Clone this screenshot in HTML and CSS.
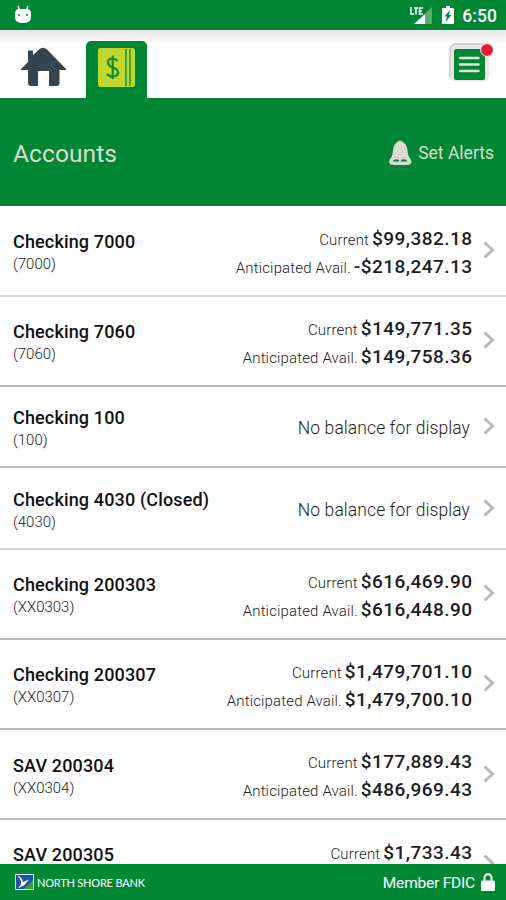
FILE: index.html
```html
<!DOCTYPE html>
<html lang="en">
<head>
<meta charset="utf-8">
<title>Accounts</title>
<link rel="stylesheet" href="styles.css">
</head>
<body>
<div class="app">
  <div class="status">
    <svg class="droid" width="18" height="20" viewBox="0 0 18 20"><path d="M4 1l2 5M14 1l-2 5" stroke="#fff" stroke-width="1.5"/><path d="M1 9q0-5 4-5h8q4 0 4 5v3q0 6-8 6t-8-6z" fill="#fff"/><circle cx="5" cy="10" r="1" fill="#008736"/><circle cx="13" cy="10" r="1" fill="#008736"/></svg>
    <div class="status-right">
      <svg width="23" height="20" viewBox="0 0 23 20"><path d="M15 7.500L22 1v17h-7z" fill="#58ad70"/><path d="M4 18L15 8v10z" fill="#fff"/><path d="M1 1v7h3M4 2h4M6 2v6.500M13 2h-3.500v6H13M9.500 5H12" fill="none" stroke="#fff" stroke-width="1.600"/></svg>
      <svg class="battery" width="12" height="19" viewBox="0 0 12 19"><path d="M1 2h3V0h4v2h3q1 0 1 1v14q0 1-1 1H1q-1 0-1-1V3q0-1 1-1z" fill="#fff"/><path d="M8 4L2.500 10.500H5L3.500 16 9.500 9H7z" fill="#008736"/></svg>
      <span class="clock">6:50</span>
    </div>
  </div>
  <nav class="tabs">
    <svg class="home" width="45" height="40" viewBox="0 0 45 40"><path d="M0 22L7 15V3.500h5V8l6-5.500q4-3.500 8 0L45 22v1h-6.500v13q0 3-3 3H28V24H17v15h-7q-3 0-3-3V23H0z" fill="#35444f"/></svg>
    <div class="tab">
      <svg width="37" height="40" viewBox="0 0 37 40"><rect width="37" height="39" rx="3" fill="#bfd72f"/><path d="M28 1v37M32 1v37" stroke="#008736" stroke-width="1.300"/><path d="M19.500 13q-2-2.500-5-2.500-4.500 0-4.500 4 0 3 4.500 4.700 5.500 2 5.500 5.300 0 4-5.500 4-3.500 0-5.500-2.500M14.700 7.500v23.500" fill="none" stroke="#168b2f" stroke-width="2.200"/></svg>
    </div>
    <svg class="menu" width="45" height="44" viewBox="0 0 45 44"><rect x="0" y="2" width="40" height="38" rx="7" fill="#d2d2d2"/><rect x="2" y="4" width="38" height="36.500" rx="5" fill="#e8e8e8"/><rect x="5" y="8" width="31" height="31" rx="2" fill="#008736"/><path d="M11 17h18.500M11 23.500h18.500M11 30h18.500" stroke="#e6e5d8" stroke-width="2.500" stroke-linecap="round"/><circle cx="38" cy="9" r="6.400" fill="#e31d35" stroke="#f5f5f5"/></svg>
  </nav>
  <header class="heading">
    <h1>Accounts</h1>
    <div class="alerts">
      <svg width="24" height="26" viewBox="0 0 24 26"><path d="M10 1.500q2-2 4 0 5 2.500 5.500 9 .5 6 3 8.500 3 6-4 6H6q-7 0-4-6 2.500-2.500 3-8.500.5-6.500 5-9z" fill="#dcd9cf"/><path d="M4.500 21.500q2-3.500 6.500-1.500v1.500zM13 21.500V20q4.500-2 6.500 1.500z" fill="#008736"/></svg>
      <span>Set Alerts</span>
    </div>
  </header>
  <main class="list">
    <div class="row soft"><div class="acct"><b>Checking 7000</b><small>(7000)</small></div><div class="bal"><p><span>Current</span><strong>$99,382.18</strong></p><p><span>Anticipated Avail.</span><strong>-$218,247.13</strong></p></div><svg class="chev" viewBox="0 0 12 18"><path d="M1.500 1.500L9.500 9l-8 7.500"/></svg></div>
    <div class="row"><div class="acct"><b>Checking 7060</b><small>(7060)</small></div><div class="bal"><p><span>Current</span><strong>$149,771.35</strong></p><p><span>Anticipated Avail.</span><strong>$149,758.36</strong></p></div><svg class="chev" viewBox="0 0 12 18"><path d="M1.500 1.500L9.500 9l-8 7.500"/></svg></div>
    <div class="row short"><div class="acct"><b>Checking 100</b><small>(100)</small></div><div class="none">No balance for display</div><svg class="chev" viewBox="0 0 12 18"><path d="M1.500 1.500L9.500 9l-8 7.500"/></svg></div>
    <div class="row short soft"><div class="acct"><b>Checking 4030 (Closed)</b><small>(4030)</small></div><div class="none">No balance for display</div><svg class="chev" viewBox="0 0 12 18"><path d="M1.500 1.500L9.500 9l-8 7.500"/></svg></div>
    <div class="row"><div class="acct"><b>Checking 200303</b><small>(XX0303)</small></div><div class="bal"><p><span>Current</span><strong>$616,469.90</strong></p><p><span>Anticipated Avail.</span><strong>$616,448.90</strong></p></div><svg class="chev" viewBox="0 0 12 18"><path d="M1.500 1.500L9.500 9l-8 7.500"/></svg></div>
    <div class="row"><div class="acct"><b>Checking 200307</b><small>(XX0307)</small></div><div class="bal"><p><span>Current</span><strong>$1,479,701.10</strong></p><p><span>Anticipated Avail.</span><strong>$1,479,700.10</strong></p></div><svg class="chev" viewBox="0 0 12 18"><path d="M1.500 1.500L9.500 9l-8 7.500"/></svg></div>
    <div class="row"><div class="acct"><b>SAV 200304</b><small>(XX0304)</small></div><div class="bal"><p><span>Current</span><strong>$177,889.43</strong></p><p><span>Anticipated Avail.</span><strong>$486,969.43</strong></p></div><svg class="chev" viewBox="0 0 12 18"><path d="M1.500 1.500L9.500 9l-8 7.500"/></svg></div>
    <div class="row last"><div class="acct"><b>SAV 200305</b></div><div class="bal"><p><span>Current</span><strong>$1,733.43</strong></p></div><svg class="chev" viewBox="0 0 12 18"><path d="M1.500 1.500L9.500 9l-8 7.500"/></svg></div>
  </main>
  <footer class="footer">
    <svg width="19" height="16" viewBox="0 0 19 16"><rect x=".5" y=".5" width="18" height="15" fill="#1c55a4" stroke="#d8e6ee"/><path d="M9 15L18 6v9z" fill="#36a13c"/><path d="M2 1.500q5 1 6 6.500l6-2.500-4.500 5.500L3 14.500l3-4q1-5-4-9z" fill="#fff"/></svg>
    <span class="brand">NORTH SHORE BANK</span>
    <span class="fdic">Member FDIC</span>
    <svg width="14" height="18" viewBox="0 0 14 18"><path d="M3.500 8V5q0-3.800 3.500-3.800T10.500 5v3" fill="none" stroke="#fff" stroke-width="2"/><rect y="7.500" width="14" height="10.500" rx="1.500" fill="#fff"/></svg>
  </footer>
</div>
</body>
</html>
```
FILE: styles.css
```css
* { box-sizing: border-box; }
body { margin: 0; background: #fff; font-family: Roboto, "Liberation Sans", sans-serif; color: #1d1d1d; }
.app { width: 506px; height: 900px; display: flex; flex-direction: column; overflow: hidden; }
svg { display: block; flex: none; }
.status { height: 30px; flex: none; background: #008736; display: flex; justify-content: space-between; padding: 5px 9px 0 14px; }
.status-right { display: flex; }
.status-right > svg { margin-top: 1px; }
.battery { margin-left: 9px; }
.clock { color: #fff; font-size: 17.5px; font-weight: 500; line-height: 22px; margin-left: 8px; letter-spacing: .1px; }
.tabs { height: 68px; flex: none; display: flex; background: linear-gradient(#e7e7e7, #fff 15px); }
.home { margin: 17px 0 0 21px; }
.tab { width: 61px; margin: 11px 0 0 20px; background: #008736; border-radius: 5px 5px 0 0; padding: 7px 0 0 12px; }
.menu { margin: 11px 12px 0 auto; }
.heading { height: 108px; flex: none; background: #008736; display: flex; align-items: center; justify-content: space-between; padding: 2px 12px 0 13px; color: #dcdccb; }
h1 { font-size: 24.5px; font-weight: 400; margin: 0; letter-spacing: .1px; }
.alerts { display: flex; align-items: center; gap: 6px; font-size: 17.5px; }
.list { flex: 1; min-height: 0; overflow: hidden; padding-top: .8px; }
.row { height: 90.1px; border-bottom: 2px solid #bababa; display: flex; align-items: center; padding: 0 11px 0 13px; }
.row.soft { border-bottom-color: #d5d5d5; }
.row.short { height: 81.4px; }
.acct { flex: 1; padding-top: 5px; }
.acct b { display: block; font-size: 18px; line-height: 22px; font-weight: 500; letter-spacing: .15px; color: #111; }
.acct small { display: block; font-size: 15px; line-height: 22px; font-weight: 300; color: #222; }
.bal { padding-top: 6px; }
.bal p { margin: 0; display: flex; justify-content: flex-end; align-items: baseline; line-height: 26.6px; gap: 3px; }
.bal span { font-size: 15px; font-weight: 300; letter-spacing: .15px; color: #222; }
.bal strong { font-size: 19px; font-weight: 500; letter-spacing: .45px; margin-right: -.45px; }
.none { font-size: 17.5px; font-weight: 300; letter-spacing: .08px; margin-right: 2px; padding-top: 3px; }
.chev { width: 12px; height: 18px; margin: 0 0 1px 11px; fill: none; stroke: #b9b9b9; stroke-width: 3; }
.row.last { align-items: flex-start; padding-top: 16px; }
.row.last .acct { padding-top: 8px; }
.row.last .bal { padding-top: 4px; }
.row.last .chev { margin-top: 18px; }
.footer { height: 36px; flex: none; background: #008736; color: #fff; display: flex; align-items: center; padding: 0 11px 0 15px; }
.brand { font: 11px Lato, "Liberation Sans", sans-serif; letter-spacing: -.2px; margin-left: 3px; }
.fdic { margin: 2px 6px 0 auto; font-size: 15.5px; letter-spacing: -.2px; }
```
